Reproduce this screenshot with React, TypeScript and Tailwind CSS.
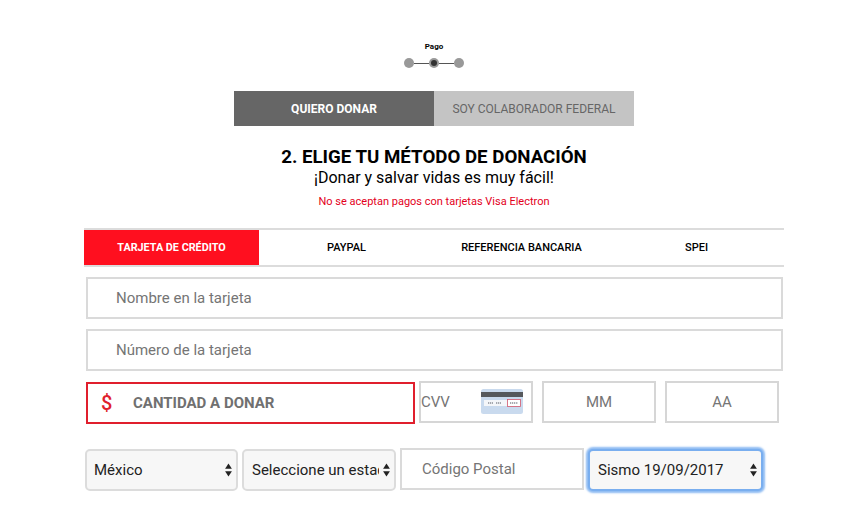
const methods = [
  { name: 'TARJETA DE CRÉDITO', active: true },
  { name: 'PAYPAL', active: false },
  { name: 'REFERENCIA BANCARIA', active: false },
  { name: 'SPEI', active: false },
];

function Arrows() {
  return (
    <svg width="7" height="14" viewBox="0 0 7 14" className="shrink-0">
      <path d="M3.5 0.5L6.9 5.8H0.1Z" fill="#222" />
      <path d="M3.5 13.5L6.9 8.2H0.1Z" fill="#222" />
    </svg>
  );
}

function CardIcon() {
  return (
    <svg width="42" height="26" viewBox="0 0 42 26" className="shrink-0">
      <rect x="0" y="0" width="42" height="25" rx="2.5" fill="#c9daee" />
      <rect x="0" y="3" width="42" height="5" fill="#55585c" />
      <rect x="3" y="11" width="36" height="6" fill="#f4f6f9" />
      <rect x="26.5" y="10.5" width="13" height="7" fill="#fff" stroke="#d0566c" strokeWidth="0.8" />
      <path d="M7 14h5M15 14h5M29 14h8" stroke="#8b8f96" strokeWidth="1.4" strokeDasharray="1.2 0.7" />
    </svg>
  );
}

function Select({ label, className }: { label: string; className: string }) {
  return (
    <div className={`flex items-center rounded-[5px] bg-[#f7f7f7] text-[15px] text-[#222] ${className}`}>
      <span className="flex-1 overflow-hidden whitespace-nowrap">{label}</span>
      <Arrows />
    </div>
  );
}

export default function App() {
  return (
    <div className="min-h-[507px] w-[849px] overflow-hidden bg-white font-['Roboto',sans-serif]">
      <div className="flex flex-col items-center pl-[19px] pt-[42px]">
        <p className="text-[8px] font-bold leading-[10px] text-black">Pago</p>
        <div className="mt-[6px] flex items-center">
          <span className="size-[10px] rounded-full bg-[#999]" />
          <span className="h-px w-[15px] bg-[#555]" />
          <span className="flex size-[10px] items-center justify-center rounded-full bg-[#999]">
            <span className="size-[6px] rounded-full bg-[#333]" />
          </span>
          <span className="h-px w-[15px] bg-[#555]" />
          <span className="size-[10px] rounded-full bg-[#999]" />
        </div>

        <div className="mt-[23px] flex h-[35px] w-[400px] text-xs">
          <div className="flex w-[200px] items-center justify-center bg-[#666] font-bold text-white">QUIERO DONAR</div>
          <div className="flex w-[200px] items-center justify-center bg-[#c4c4c4] text-[#666]">SOY COLABORADOR FEDERAL</div>
        </div>

        <h1 className="mt-[20px] text-[18.7px] font-bold leading-[22px] text-black">2. ELIGE TU MÉTODO DE DONACIÓN</h1>
        <p className="text-base leading-[20px] text-black">¡Donar y salvar vidas es muy fácil!</p>
        <p className="mt-[7px] text-[11px] leading-[14px] text-[#e3001b]">No se aceptan pagos con tarjetas Visa Electron</p>
      </div>

      <div className="ml-[84px] mt-[19px] flex h-[39px] w-[700px] border-y-2 border-[#dcdcdc]">
        {methods.map((m) => (
          <div
            key={m.name}
            className={`flex w-[175px] items-center justify-center pt-px ${m.active ? 'bg-[#ff0f1f] text-[10.8px] font-bold text-white' : 'text-[11px] font-medium text-black'}`}
          >
            {m.name}
          </div>
        ))}
      </div>

      <div className="ml-[86px] mt-[10px] flex w-[697px] flex-col gap-[10px]">
        <input
          placeholder="Nombre en la tarjeta"
          className="h-[42px] border-2 border-[#dadada] px-[28px] text-[15px] outline-none placeholder:text-[#757575]"
        />
        <input
          placeholder="Número de la tarjeta"
          className="h-[42px] border-2 border-[#dadada] px-[28px] text-[15px] outline-none placeholder:text-[#757575]"
        />
      </div>

      <div className="ml-[86px] mt-[10px] flex items-start">
        <div className="mt-px flex h-[42px] w-[329px] items-center border-2 border-[#e01f2d] pl-[13px]">
          <span className="w-[32px] text-xl font-medium leading-none text-[#e01f2d]">$</span>
          <span className="text-[15px] font-bold text-[#707070]">CANTIDAD A DONAR</span>
        </div>
        <div className="ml-[4px] flex h-[42px] w-[114px] items-center justify-between border-2 border-[#d6d6d6] pr-[8px] text-[15px] text-[#757575]">
          CVV
          <CardIcon />
        </div>
        <div className="ml-[9px] flex h-[42px] w-[114px] items-center justify-center border-2 border-[#d6d6d6] text-[15px] text-[#757575]">MM</div>
        <div className="ml-[9px] flex h-[42px] w-[114px] items-center justify-center border-2 border-[#d6d6d6] text-[15px] text-[#757575]">AA</div>
      </div>

      <div className="ml-[85px] mt-[24px] flex items-start gap-[4px]">
        <Select label="México" className="mt-px h-[42px] w-[153px] border-2 border-[#dcdcdc] pl-[7px] pr-[4px]" />
        <Select label="Seleccione un estado" className="mt-px h-[42px] w-[154px] gap-[4px] border-2 border-[#dcdcdc] pl-[8px] pr-[4px]" />
        <input
          placeholder="Código Postal"
          className="h-[42px] w-[184px] border-2 border-[#dadada] px-[20px] text-[15px] outline-none placeholder:text-[#757575]"
        />
        <Select
          label="Sismo 19/09/2017"
          className="mt-px h-[42px] w-[175px] border-2 border-[#79aeef] pl-[8px] pr-[4px] shadow-[0_0_2px_2px_#8fbcf3]"
        />
      </div>
    </div>
  );
}
